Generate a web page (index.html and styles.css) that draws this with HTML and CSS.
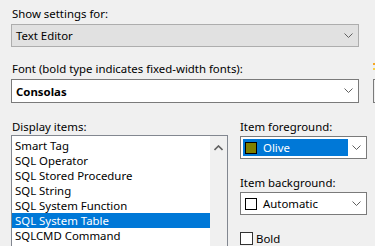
FILE: index.html
```html
<!DOCTYPE html>
<html>
<head>
<meta charset="utf-8">
<link rel="stylesheet" href="styles.css">
</head>
<body>
<div class="page">
  <div class="label first">Show settings for:</div>
  <div class="combo flat">
    <span class="combo-text">Text Editor</span>
    <svg class="chev" width="9" height="6" viewBox="0 0 9 6"><path d="M0.5 0.5 L4.5 4.5 L8.5 0.5" fill="none" stroke="#606060" stroke-width="1"/></svg>
  </div>
  <div class="label font-label">Font (bold type indicates fixed-width fonts):<span class="warn"></span></div>
  <div class="font-row">
    <div class="combo white tall">
      <span class="combo-text bold">Consolas</span>
      <svg class="chev" width="9" height="6" viewBox="0 0 9 6"><path d="M0.5 0.5 L4.5 4.5 L8.5 0.5" fill="none" stroke="#606060" stroke-width="1"/></svg>
    </div>
    <div class="side-btn"></div>
  </div>
  <div class="lower">
    <div class="left">
      <div class="label">Display items:</div>
      <div class="listbox">
        <ul class="items">
          <li>Smart Tag</li>
          <li>SQL Operator</li>
          <li>SQL Stored Procedure</li>
          <li>SQL String</li>
          <li>SQL System Function</li>
          <li class="sel">SQL System Table</li>
          <li>SQLCMD Command</li>
        </ul>
        <div class="scrollbar">
          <svg width="9" height="6" viewBox="0 0 9 6"><path d="M0.5 5 L4.5 1 L8.5 5" fill="none" stroke="#606060" stroke-width="1.6"/></svg>
        </div>
      </div>
    </div>
    <div class="right">
      <div class="label">Item foreground:</div>
      <div class="combo white">
        <div class="color-sel selected">
          <span class="swatch olive"></span>
          <span>Olive</span>
        </div>
        <svg class="chev" width="9" height="6" viewBox="0 0 9 6"><path d="M0.5 0.5 L4.5 4.5 L8.5 0.5" fill="none" stroke="#606060" stroke-width="1"/></svg>
      </div>
      <div class="label bg-label">Item background:</div>
      <div class="combo white">
        <div class="color-sel">
          <span class="swatch"></span>
          <span>Automatic</span>
        </div>
        <svg class="chev" width="9" height="6" viewBox="0 0 9 6"><path d="M0.5 0.5 L4.5 4.5 L8.5 0.5" fill="none" stroke="#606060" stroke-width="1"/></svg>
      </div>
      <label class="check"><span class="box"></span><span>Bold</span></label>
    </div>
  </div>
</div>
</body>
</html>
```

FILE: styles.css
```css
* { box-sizing: border-box; }
html, body {
  margin: 0;
  padding: 0;
  background: #f0f0f0;
  overflow: hidden;
}
body {
  width: 375px;
  height: 246px;
  font-family: "Noto Sans", "Open Sans", sans-serif;
  font-size: 11.4px;
  color: #000;
}
.page {
  padding: 6px 0 0 11px;
  width: 375px;
}
.label {
  height: 15px;
  line-height: 15px;
  padding-left: 1px;
  white-space: nowrap;
}
.first { margin-bottom: 3px; }
.font-label {
  margin-top: 14px;
  margin-bottom: 3px;
  position: relative;
}
.warn {
  position: absolute;
  left: 362px;
  top: 2px;
  width: 2px;
  height: 7px;
  background: linear-gradient(#f5a623 0 2px, transparent 2px 5px, #f7d04a 5px 7px);
}
.combo {
  position: relative;
  height: 23px;
  display: flex;
  align-items: center;
  border: 1px solid #adadad;
  flex: none;
}
.combo.flat {
  width: 348px;
  background: #e1e1e1;
}
.combo.white {
  background: #fff;
  border-color: #7a7a7a;
}
.combo.tall { height: 24px; width: 348px; }
.combo-text {
  padding-left: 4px;
}
.bold { font-weight: bold; }
.chev {
  position: absolute;
  right: 5px;
  top: 8px;
}
.font-row {
  display: flex;
  gap: 14px;
}
.side-btn {
  flex: 1;
  min-width: 0;
  height: 24px;
  border: 1px solid #7a7a7a;
  border-right: none;
  background: #f0f0f0;
}
.lower {
  display: grid;
  grid-template-columns: 217px 127px;
  column-gap: 12px;
  margin-top: 16px;
}
.listbox {
  margin-top: 1px;
  height: 120px;
  border: 1px solid #828790;
  background: #fff;
  display: flex;
}
.items {
  list-style: none;
  margin: 0;
  padding: 2px 0 0 0;
  flex: 1;
}
.items li {
  height: 15px;
  line-height: 15px;
  padding-left: 3px;
  white-space: nowrap;
}
.items li.sel {
  background: #0078d7;
  color: #fff;
}
.scrollbar {
  width: 17px;
  background: #f0f0f0;
  display: flex;
  justify-content: center;
  padding-top: 9px;
}
.scrollbar svg { display: block; }
.right .label { padding-left: 0; }
.right .combo { margin-top: 2px; }
.bg-label { margin-top: 16px; }
.color-sel {
  display: flex;
  align-items: center;
  gap: 6px;
  height: 17px;
  width: 105px;
  margin-left: 2px;
  padding-left: 2px;
}
.color-sel.selected {
  background: #0078d7;
  color: #fff;
}
.swatch {
  width: 12px;
  height: 12px;
  border: 1px solid #000;
  background: #fff;
  flex: none;
}
.swatch.olive { background: #808000; }
.check {
  display: flex;
  align-items: center;
  gap: 3px;
  margin-top: 16px;
}
.box {
  width: 13px;
  height: 13px;
  border: 1px solid #333;
  background: #fff;
}
```
